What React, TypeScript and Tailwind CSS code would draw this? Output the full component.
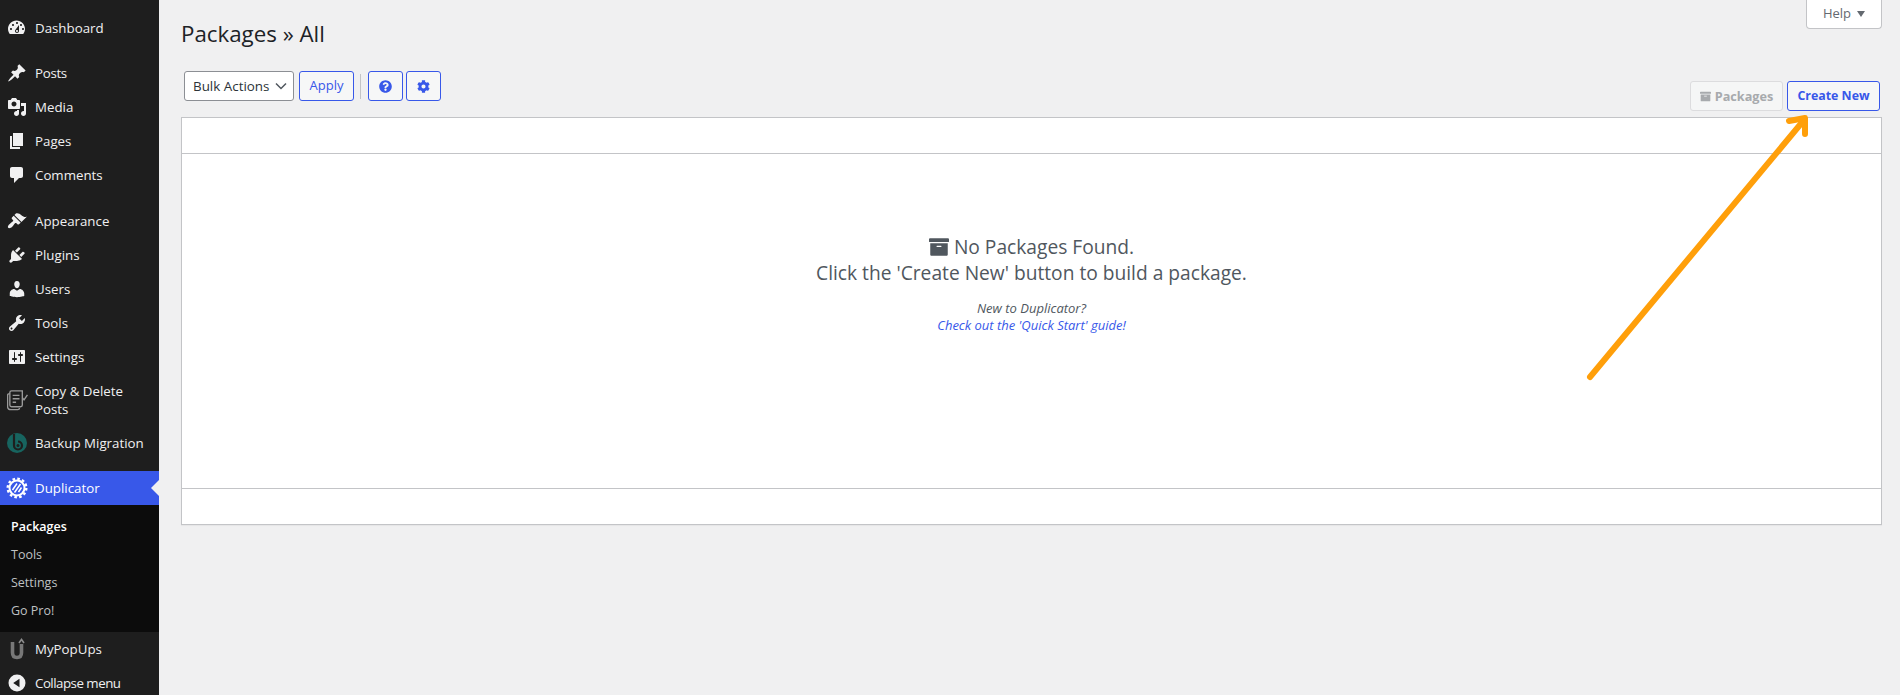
import { FaArchive, FaCog, FaQuestionCircle } from "react-icons/fa";

const font = "font-['Open_Sans','Liberation_Sans',sans-serif]";

const icons: Record<string, string> = {
  dashboard:
    "M3.76 16h12.48c1.1-1.43 1.76-3.21 1.76-5.14 0-4.67-3.81-8.46-8.5-8.46-4.7 0-8.5 3.79-8.5 8.46 0 1.93.66 3.71 1.76 5.14zM10 4c.55 0 1 .45 1 1s-.45 1-1 1-1-.45-1-1 .45-1 1-1zM6 6c.55 0 1 .45 1 1s-.45 1-1 1-1-.45-1-1 .45-1 1-1zm8 0c.55 0 1 .45 1 1s-.45 1-1 1-1-.45-1-1 .45-1 1-1zm-5.37 5.55L12 7v6c0 1.1-.9 2-2 2s-2-.9-2-2c0-.57.24-1.08.63-1.45zM4 10c.55 0 1 .45 1 1s-.45 1-1 1-1-.45-1-1 .45-1 1-1zm12 0c.55 0 1 .45 1 1s-.45 1-1 1-1-.45-1-1 .45-1 1-1zm-5 3c0-.55-.45-1-1-1s-1 .45-1 1 .45 1 1 1 1-.45 1-1z",
  posts:
    "M10.44 3.02l1.82-1.82 6.36 6.35-1.83 1.82c-1.05-.68-2.48-.57-3.41.36l-.75.75c-.92.93-1.04 2.35-.35 3.41l-1.83 1.82-2.41-2.41-2.8 2.79c-.42.42-3.38 2.71-3.8 2.29s1.86-3.39 2.28-3.81l2.79-2.79L4.1 9.36l1.83-1.82c1.05.69 2.48.57 3.4-.36l.75-.75c.93-.92 1.05-2.35.36-3.41z",
  media:
    "M13 11V4c0-.55-.45-1-1-1h-1.67L9 1H5L3.67 3H2c-.55 0-1 .45-1 1v7c0 .55.45 1 1 1h10c.55 0 1-.45 1-1zM7 4.5c1.38 0 2.5 1.12 2.5 2.5S8.38 9.5 7 9.5 4.5 8.38 4.5 7 5.62 4.5 7 4.5zM14 6h5v10.5c0 1.38-1.12 2.5-2.5 2.5S14 17.88 14 16.5s1.12-2.5 2.5-2.5c.17 0 .34.02.5.05V9h-3V6zm-4 8.05V13h2v3.5c0 1.38-1.12 2.5-2.5 2.5S7 17.88 7 16.5 8.12 14 9.5 14c.17 0 .34.02.5.05z",
  pages: "M6 15V2h10v13H6zm-1 1h8v2H3V5h2v11z",
  comments:
    "M5 2h9c1.1 0 2 .9 2 2v7c0 1.1-.9 2-2 2h-2l-5 5v-5H5c-1.1 0-2-.9-2-2V4c0-1.1.9-2 2-2z",
  appearance:
    "M14.48 11.06L7.41 3.99l1.5-1.5c.5-.56 2.3-.47 3.51.32 1.21.8 1.43 1.28 2.91 2.1 1.18.64 2.45 1.26 4.45.85zm-.71.71L6.7 4.7 4.93 6.47c-.39.39-.39 1.02 0 1.41l1.06 1.06c.39.39.39 1.03 0 1.42-.6.6-1.43 1.11-2.21 1.69-.35.26-.7.53-1.01.84C1.43 13.71.2 15.84 1.2 16.83c.99.99 3.12-.24 4.26-1.38.3-.3.58-.66.84-1.01.58-.78 1.09-1.61 1.69-2.21.39-.39 1.03-.39 1.42 0l1.06 1.06c.39.39 1.02.39 1.41 0z",
  plugins:
    "M13.11 4.36L9.87 7.6 8 5.73l3.24-3.24c.35-.34 1.05-.2 1.56.32.52.51.66 1.21.31 1.55zm-8 1.77l.91-1.12 9.01 9.01-1.19.84c-.71.71-2.63 1.16-3.82 1.16H6.14L4.9 17.26c-.59.59-1.54.59-2.12 0-.59-.58-.59-1.53 0-2.12l1.24-1.24v-3.88c0-1.13.4-3.05 1.09-3.89zm7.26 3.97l3.24-3.24c.34-.35 1.04-.21 1.55.31.52.51.66 1.21.31 1.55l-3.24 3.25z",
  users:
    "M10 9.25c-2.27 0-2.73-3.44-2.73-3.44C7 4.02 7.82 2 9.97 2c2.16 0 2.98 2.02 2.71 3.81 0 0-.41 3.44-2.68 3.44zm0 2.57L12.72 10c2.39 0 4.52 2.33 4.52 4.53v2.49s-3.65 1.13-7.24 1.13c-3.65 0-7.24-1.13-7.24-1.13v-2.49c0-2.25 1.94-4.48 4.47-4.48z",
  tools:
    "M16.68 9.77c-1.34 1.34-3.3 1.67-4.95.99l-5.41 6.52c-.99.99-2.59.99-3.58 0s-.99-2.59 0-3.57l6.52-5.42c-.68-1.65-.35-3.61.99-4.95 1.28-1.28 3.12-1.62 4.72-1.06l-2.89 2.89 2.82 2.82 2.86-2.87c.53 1.58.18 3.4-1.08 4.65zM3.81 16.21c.4.39 1.03.39 1.43 0 .4-.4.4-1.03 0-1.43-.4-.39-1.03-.39-1.43 0-.39.4-.39 1.03 0 1.43z",
  settings:
    "M18 16V4c0-.55-.45-1-1-1H3c-.55 0-1 .45-1 1v12c0 .55.45 1 1 1h14c.55 0 1-.45 1-1zM8 11h1c.55 0 1 .45 1 1s-.45 1-1 1H8v1.5c0 .28-.22.5-.5.5s-.5-.22-.5-.5V13H6c-.55 0-1-.45-1-1s.45-1 1-1h1V5.5c0-.28.22-.5.5-.5s.5.22.5.5V11zm5-2h-1c-.55 0-1-.45-1-1s.45-1 1-1h1V5.5c0-.28.22-.5.5-.5s.5.22.5.5V7h1c.55 0 1 .45 1 1s-.45 1-1 1h-1v5.5c0 .28-.22.5-.5.5s-.5-.22-.5-.5V9z",
  collapse:
    "M10 1.5a8.5 8.5 0 1 0 0 17 8.5 8.5 0 0 0 0-17zm2.5 4.2v8.6L6.2 10z",
};

function DashIcon({ name }: { name: string }) {
  return (
    <svg viewBox="0 0 20 20" className="w-5 h-5 fill-[#f0f0f1]">
      <path d={icons[name]} />
    </svg>
  );
}

function CopyDeleteIcon() {
  return (
    <svg viewBox="3 2.500 18.500 18" className="w-[21px] h-[21px] fill-none stroke-[#9a9a9a] stroke-[1.200]">
      <path d="M7 3h9.500v12.500q0 1.500-1.500 1.500H7q-1.500 0-1.500-1.500V4.500Q5.500 3 7 3z" />
      <path d="M5.500 5.500q-2 0-2 1.500v9.500q0 3 3 3h6q1.500 0 1.500-1.500" />
      <path d="M8 7h6M8 10h6M8 13h3" />
      <path d="M16.500 9l1.500 2 3-4.500" />
    </svg>
  );
}

function BackupIcon() {
  return (
    <svg viewBox="0 0 22 22" className="w-[22px] h-[22px]">
      <circle cx="11" cy="11" r="10" fill="#17645f" />
      <path d="M8 2v11.500a4 4 0 1 0 4-4" fill="none" stroke="#1e1e1e" strokeWidth="2.200" />
      <circle cx="12" cy="13.500" r="1.500" fill="#1e1e1e" />
    </svg>
  );
}

function DuplicatorIcon() {
  return (
    <svg viewBox="0 0 22 22" className="w-[22px] h-[22px] fill-none stroke-white">
      <circle cx="11" cy="11" r="7.500" strokeWidth="2" />
      <circle cx="11" cy="11" r="9.300" strokeWidth="2.400" strokeDasharray="2.600 2.270" />
      <path d="M6.500 13l4.500-6.500M8.500 15.500l6-8.500M12.500 15l3-4.500" strokeWidth="1.500" />
    </svg>
  );
}

function PopUpsIcon() {
  return (
    <svg viewBox="0 0 20 22" className="w-5 h-[22px] fill-none">
      <path d="M5.500 4v10.500q0 5 4.500 5t4.500-5V6" stroke="#777777" strokeWidth="3.600" />
      <path d="M10.500 6v9" stroke="#1e1e1e" strokeWidth="1.400" />
      <path d="M12 5l2.500-3.500L17 5" stroke="#8a8a8a" strokeWidth="1.600" />
    </svg>
  );
}

function MenuItem({
  label,
  icon,
  className = "",
  labelClass = "",
}: {
  label: string;
  icon: React.ReactNode;
  className?: string;
  labelClass?: string;
}) {
  return (
    <div className={`flex items-center min-h-[34px] text-[#f0f0f1] ${className}`}>
      <div className="w-[35px] flex justify-center shrink-0 pr-[1px]">{icon}</div>
      <span className={`text-[13.300px] leading-[18px] ${labelClass}`}>{label}</span>
    </div>
  );
}

function Sidebar() {
  return (
    <aside className="w-[159px] shrink-0 bg-[#1e1e1e] pt-[11px] h-[695px] overflow-hidden">
      <MenuItem label="Dashboard" icon={<DashIcon name="dashboard" />} className="mb-[11px]" />
      <MenuItem label="Posts" icon={<DashIcon name="posts" />} labelClass="tracking-[-0.3px]" />
      <MenuItem label="Media" icon={<DashIcon name="media" />} />
      <MenuItem label="Pages" icon={<DashIcon name="pages" />} />
      <MenuItem label="Comments" icon={<DashIcon name="comments" />} className="mb-[12px]" />
      <MenuItem label="Appearance" icon={<DashIcon name="appearance" />} />
      <MenuItem label="Plugins" icon={<DashIcon name="plugins" />} />
      <MenuItem label="Users" icon={<DashIcon name="users" />} />
      <MenuItem label="Tools" icon={<DashIcon name="tools" />} />
      <MenuItem label="Settings" icon={<DashIcon name="settings" />} />
      <MenuItem label="Copy & Delete Posts" icon={<CopyDeleteIcon />} className="h-[52px] pr-4" />
      <MenuItem label="Backup Migration" icon={<BackupIcon />} className="mb-[11px]" />
      <div className="relative bg-[#3858e9]">
        <MenuItem label="Duplicator" icon={<DuplicatorIcon />} className="text-white" />
        <div className="absolute right-0 top-[9px] w-0 h-0 border-y-8 border-y-transparent border-r-8 border-r-[#f0f0f1]" />
      </div>
      <div className="bg-[#0c0c0c] h-[127px] pt-[8px] pl-[11px] text-[12.500px] text-[#bfc1c3]">
        <div className="h-[28px] leading-[28px] font-semibold text-white">Packages</div>
        <div className="h-[28px] leading-[28px]">Tools</div>
        <div className="h-[28px] leading-[28px]">Settings</div>
        <div className="h-[28px] leading-[28px]">Go Pro!</div>
      </div>
      <MenuItem label="MyPopUps" icon={<PopUpsIcon />} />
      <MenuItem label="Collapse menu" icon={<DashIcon name="collapse" />} labelClass="tracking-[-0.5px]" />
    </aside>
  );
}

function Toolbar() {
  return (
    <div className="flex items-start justify-between h-[46px]">
      <div className="flex items-center h-[30px] ml-[3px]">
        <div className="w-[110px] h-[30px] flex items-center justify-between pl-[8px] pr-[6px] bg-white border border-[#8c8f94] rounded-[3px] text-[13.400px] text-[#2c3338]">
          <span>Bulk Actions</span>
          <svg viewBox="0 0 12 8" className="w-3 h-2 fill-none stroke-[#50575e] stroke-[1.500]">
            <path d="M1 1.500l5 5 5-5" />
          </svg>
        </div>
        <div className="ml-[5px] w-[55px] h-[30px] flex items-center justify-center bg-[#f6f7f7] border border-[#3858e9] rounded-[3px] text-[13px] text-[#3858e9]">
          Apply
        </div>
        <div className="ml-[6px] w-px h-[25px] bg-[#c3c4c7]" />
        <div className="ml-[7px] w-[35px] h-[30px] flex items-center justify-center bg-[#f6f7f7] border border-[#3858e9] rounded-[3px] text-[#3858e9] text-[13px]">
          <FaQuestionCircle />
        </div>
        <div className="ml-[3px] w-[35px] h-[30px] flex items-center justify-center bg-[#f6f7f7] border border-[#3858e9] rounded-[3px] text-[#3858e9] text-[13px]">
          <FaCog />
        </div>
      </div>
      <div className="flex items-center gap-[4px] mt-[10px] mr-[2px]">
        <div className="w-[93px] h-[30px] pt-[1px] flex items-center justify-center gap-[4px] bg-[#f5f6f6] border border-[#dcdcde] rounded-[3px] text-[12.700px] font-bold text-[#a7aaad]">
          <FaArchive className="text-[11px]" />
          Packages
        </div>
        <div className="w-[93px] h-[30px] pt-[1px] flex items-center justify-center bg-[#f6f7f7] border border-[#3858e9] rounded-[3px] text-[12.400px] font-bold text-[#3858e9]">
          Create New
        </div>
      </div>
    </div>
  );
}

function PackagesTable() {
  return (
    <div className="bg-white border border-[#c3c4c7] h-[408px] flex flex-col shadow-[0_1px_1px_rgba(0,0,0,0.04)]">
      <div className="h-[36px] border-b border-[#c3c4c7]" />
      <div className="flex-1 flex flex-col items-center pt-[80px] text-center">
        <div className="text-[19.200px] leading-[26px] text-[#50575e]">
          <div className="flex items-center justify-center gap-[5px]">
            <FaArchive className="text-[20px] text-[#50575e]" />
            No Packages Found.
          </div>
          <div>Click the 'Create New' button to build a package.</div>
        </div>
        <div className="mt-[14px] text-[13px] leading-[17px] italic text-[#50575e]">
          <div>New to Duplicator?</div>
          <div className="text-[#3858e9]">Check out the 'Quick Start' guide!</div>
        </div>
      </div>
      <div className="h-[36px] border-t border-[#c3c4c7]" />
    </div>
  );
}

export default function App() {
  return (
    <div className={`${font} relative flex h-[695px] overflow-hidden bg-[#f0f0f1]`}>
      <Sidebar />
      <main className="flex-1 pl-[22px] pr-[18px]">
        <div className="flex items-start justify-between h-[71px]">
          <h1 className="mt-[17px] text-[22.300px] leading-[34px] text-[#1d2327]">Packages » All</h1>
          <div className="w-[76px] h-[29px] flex items-center justify-center gap-[6px] bg-white border border-t-0 border-[#c3c4c7] rounded-b-[4px] text-[13px] text-[#646970]">
            Help
            <span className="w-0 h-0 border-x-[4px] border-x-transparent border-t-[6px] border-t-[#646970]" />
          </div>
        </div>
        <Toolbar />
        <PackagesTable />
      </main>
      {/* annotation arrow drawn on top of the shot */}
      <svg className="absolute left-0 top-0 w-[1900px] h-[695px] pointer-events-none fill-none stroke-[#ff9f0a] stroke-[6px]" viewBox="0 0 1900 695" strokeLinecap="round" strokeLinejoin="round">
        <path d="M1590 377L1804 120" />
        <path d="M1789 121L1805 118L1805 134" />
      </svg>
    </div>
  );
}
